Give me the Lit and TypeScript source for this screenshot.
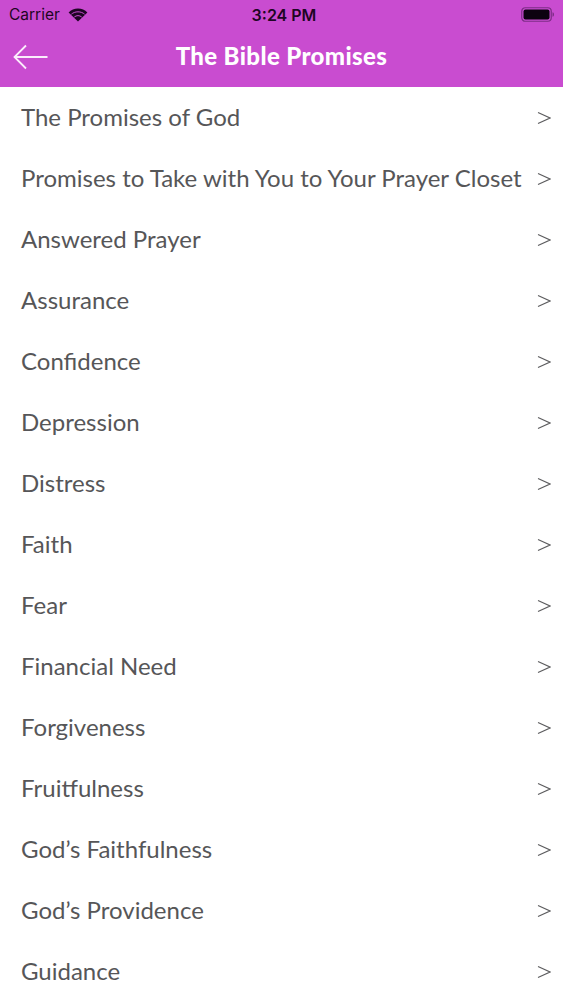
import { LitElement, html, css } from "lit";
import { customElement } from "lit/decorators.js";

const ITEMS = [
  "The Promises of God",
  "Promises to Take with You to Your Prayer Closet",
  "Answered Prayer",
  "Assurance",
  "Confidence",
  "Depression",
  "Distress",
  "Faith",
  "Fear",
  "Financial Need",
  "Forgiveness",
  "Fruitfulness",
  "God’s Faithfulness",
  "God’s Providence",
  "Guidance",
];

@customElement("app-root")
export class AppRoot extends LitElement {
  static styles = css`
    :host {
      display: block;
      width: 563px;
      height: 1000px;
      overflow: hidden;
      background: #fff;
      font-family: "Lato", "Open Sans", sans-serif;
    }
    .top {
      height: 87px;
      background: #c94cd0;
      display: flex;
      flex-direction: column;
    }
    .status {
      height: 29px;
      display: grid;
      grid-template-columns: 1fr auto 1fr;
      align-items: center;
      padding: 0 9px;
      color: #1e0524;
      font-family: "Inter", "Liberation Sans", sans-serif;
      font-size: 15.5px;
    }
    .left { display: flex; align-items: center; gap: 8px; }
    .time { font-weight: 600; font-size: 16px; margin-left: 5px; }
    .right { display: flex; justify-content: flex-end; }
    .nav {
      flex: 1;
      display: grid;
      grid-template-columns: 1fr auto 1fr;
      align-items: center;
      padding: 0 4px 2px 13px;
    }
    .nav svg { display: block; }
    .title {
      color: #fff;
      font-family: "Lato", sans-serif;
      font-weight: 900;
      font-size: 24px;
      letter-spacing: 0.38px;
      margin: -3px 9px 0 0;
    }
    .list { display: flex; flex-direction: column; }
    .row {
      height: 61.07px;
      flex: none;
      display: flex;
      align-items: center;
      justify-content: space-between;
      padding: 0 12px 0 21px;
      color: #565658;
      font-size: 24px;
      letter-spacing: 0;
    }
    .row span { white-space: nowrap; margin-top: -3px; }
    .row svg { flex: none; }
  `;

  render() {
    return html`
      <div class="top">
        <div class="status">
          <div class="left">
            <span>Carrier</span>
            <svg width="20" height="14" viewBox="0 0 20 14">
              <path d="M10 13.6 0.6 4.4C3 2 6.4 0.6 10 0.6s7 1.4 9.4 3.8Z" fill="#1e0524" />
              <path d="M3.4 6.2C5 4.8 7.4 3.8 10 3.8s5 1 6.6 2.4" fill="none" stroke="#c94cd0" stroke-width="1" />
              <path d="M6.3 9C7.3 8.2 8.6 7.6 10 7.6s2.7.6 3.7 1.4" fill="none" stroke="#c94cd0" stroke-width="1" />
            </svg>
          </div>
          <span class="time">3:24 PM</span>
          <div class="right">
            <svg width="33" height="15" viewBox="0 0 33 15">
              <rect x="0.75" y="0.75" width="29.5" height="13.5" rx="3.5" fill="none" stroke="#7d2c86" stroke-width="1.2" />
              <rect x="2.5" y="2.5" width="26" height="10" rx="2" fill="#0c0210" />
              <path d="M31.5 5.2c1 .3 1.5 1.2 1.5 2.3s-.5 2-1.5 2.3Z" fill="#7d2c86" />
            </svg>
          </div>
        </div>
        <div class="nav">
          <svg width="36" height="26" viewBox="0 0 36 26">
            <path d="M13 1.5 1.5 13 13 24.5M1.5 13H34.5" fill="none" stroke="#fbeefc" stroke-width="1.8" />
          </svg>
          <span class="title">The Bible Promises</span>
          <span></span>
        </div>
      </div>
      <div class="list">
        ${ITEMS.map(
          (t) => html`
            <div class="row">
              <span>${t}</span>
              <svg width="14" height="14" viewBox="0 0 14 14">
                <path d="M1 1.5 13 7 1 12.5" fill="none" stroke="#5c5c5e" stroke-width="1.1" />
              </svg>
            </div>
          `
        )}
      </div>
    `;
  }
}
